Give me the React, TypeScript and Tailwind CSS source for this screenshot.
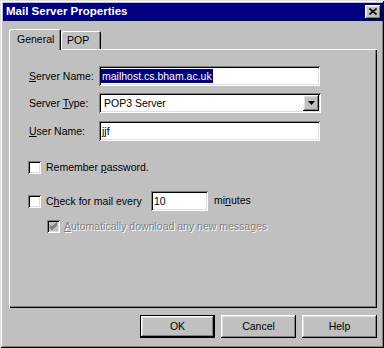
import React from "react";

const raised =
  "shadow-[inset_-1px_-1px_0_#000,inset_1px_1px_0_#fff,inset_-2px_-2px_0_#808080,inset_2px_2px_0_#dfdfdf]";
const sunken =
  "shadow-[inset_1px_1px_0_#808080,inset_-1px_-1px_0_#fff,inset_2px_2px_0_#000,inset_-2px_-2px_0_#dfdfdf]";

function CheckBox({ checked, disabled }: { checked?: boolean; disabled?: boolean }) {
  return (
    <div
      className={`w-[13px] h-[13px] shrink-0 ${disabled ? "bg-[#c0c0c0]" : "bg-white"} ${sunken}`}
    >
      {checked && (
        <svg width="13" height="13" viewBox="0 0 13 13" className="block">
          <path d="M3 5.5 L5 7.5 L10 2.5 M3 6.5 L5 8.5 L10 3.5 M3 7.5 L5 9.5 L10 4.5" stroke={disabled ? "#808080" : "#000"} strokeWidth="1" fill="none" shapeRendering="crispEdges" />
        </svg>
      )}
    </div>
  );
}

function Button({ label, def }: { label: string; def?: boolean }) {
  if (def) {
    return (
      <div className="w-[75px] h-[23px] border border-black">
        <div className={`w-full h-full bg-[#c0c0c0] flex items-center justify-center text-[10.5px] text-black ${raised}`}>
          {label}
        </div>
      </div>
    );
  }
  return (
    <div className={`w-[75px] h-[23px] bg-[#c0c0c0] flex items-center justify-center text-[10.5px] text-black ${raised}`}>
      {label}
    </div>
  );
}

export default function App() {
  return (
    <div className="w-[384px] h-[348px] bg-[#c0c0c0] flex flex-col pt-[3px] pl-[3px] pr-[1px] font-['Liberation_Sans',Arial,sans-serif] text-black shadow-[inset_1px_1px_0_#dfdfdf,inset_-1px_-1px_0_#000,inset_2px_2px_0_#fff,inset_-2px_-2px_0_#808080]">
      {/* Title bar */}
      <div className="h-[18px] bg-[#000080] flex items-center justify-between pl-[3px] pr-[2px]">
        <span className="text-white font-bold text-[11.5px] leading-none">Mail Server Properties</span>
        <div className={`w-[16px] h-[14px] bg-[#c0c0c0] flex items-center justify-center ${raised}`}>
          <svg width="8" height="7" viewBox="0 0 8 7" className="block -mt-px">
            <path d="M0.5 0.5 L7.5 6.5 M7.5 0.5 L0.5 6.5" stroke="#000" strokeWidth="1.6" fill="none" />
          </svg>
        </div>
      </div>

      {/* Tabs */}
      <div className="mt-[8px] ml-[6px] flex items-end h-[20px]">
        <div className="relative z-10 w-[52px] h-[21px] -mb-px bg-[#c0c0c0] rounded-t-[2px] shadow-[inset_1px_1px_0_#fff,inset_-1px_0_0_#000,inset_-2px_0_0_#808080] pl-[8px] pt-[4px] text-[10.5px] leading-[13px]">
          General
        </div>
        <div className="w-[40px] h-[18px] bg-[#c0c0c0] rounded-t-[2px] shadow-[inset_1px_1px_0_#fff,inset_-1px_0_0_#000,inset_-2px_0_0_#808080] pl-[6px] pt-[3px] text-[10.5px] leading-[13px]">
          POP
        </div>
      </div>

      {/* Panel */}
      <div className="ml-[6px] w-[368px] h-[259px] bg-[#c0c0c0] shadow-[inset_1px_1px_0_#fff,inset_-1px_-1px_0_#000,inset_-2px_-2px_0_#808080] pt-[17px] flex flex-col text-[10.5px] leading-[13px]">
        {/* Server Name */}
        <div className="flex items-center pl-[20px] h-[20px]">
          <div className="w-[70px]">
            <u>S</u>erver Name:
          </div>
          <div className={`w-[221px] h-[20px] bg-white flex items-center pl-[2px] ${sunken}`}>
            <span className="bg-[#000080] text-white px-[1px] leading-[14px]">mailhost.cs.bham.ac.uk</span>
          </div>
        </div>
        {/* Server Type */}
        <div className="flex items-center pl-[20px] h-[20px] mt-[7px]">
          <div className="w-[70px]">
            Server <u>T</u>ype:
          </div>
          <div className={`w-[222px] h-[20px] bg-white flex items-center justify-between p-[2px] ${sunken}`}>
            <span className="pl-[3px]">POP3 Server</span>
            <div className={`w-[16px] h-full bg-[#c0c0c0] flex items-center justify-center ${raised}`}>
              <svg width="7" height="4" viewBox="0 0 7 4" className="block">
                <path d="M0 0 H7 L3.5 4 Z" fill="#000" />
              </svg>
            </div>
          </div>
        </div>
        {/* User Name */}
        <div className="flex items-center pl-[20px] h-[20px] mt-[8px]">
          <div className="w-[70px]">
            <u>U</u>ser Name:
          </div>
          <div className={`w-[221px] h-[20px] bg-white flex items-center pl-[3px] ${sunken}`}>
            <span>jjf</span>
          </div>
        </div>

        {/* Remember password */}
        <div className="flex items-center pl-[19px] h-[13px] mt-[20px]">
          <CheckBox />
          <span className="ml-[5px]">
            Remember <u>p</u>assword.
          </span>
        </div>

        {/* Check for mail */}
        <div className="flex items-center pl-[19px] h-[20px] mt-[17px]">
          <CheckBox />
          <span className="ml-[5px] w-[105px]">
            C<u>h</u>eck for mail every
          </span>
          <div className={`w-[57px] h-[20px] bg-white flex items-center pl-[3px] ${sunken}`}>
            <span>10</span>
          </div>
          <span className="ml-[6px] -mt-[2px]">
            mi<u>n</u>utes
          </span>
        </div>

        {/* Auto download */}
        <div className="flex items-center pl-[38px] h-[13px] mt-[9px]">
          <CheckBox checked disabled />
          <span className="ml-[4px] text-[#808080] [text-shadow:1px_1px_0_#fff]">
            <u>A</u>utomatically download any new messages
          </span>
        </div>
      </div>

      {/* Buttons */}
      <div className="mt-[7px] ml-[6px] w-[368px] flex justify-end gap-[6px]">
        <Button label="OK" def />
        <Button label="Cancel" />
        <Button label="Help" />
      </div>
    </div>
  );
}
